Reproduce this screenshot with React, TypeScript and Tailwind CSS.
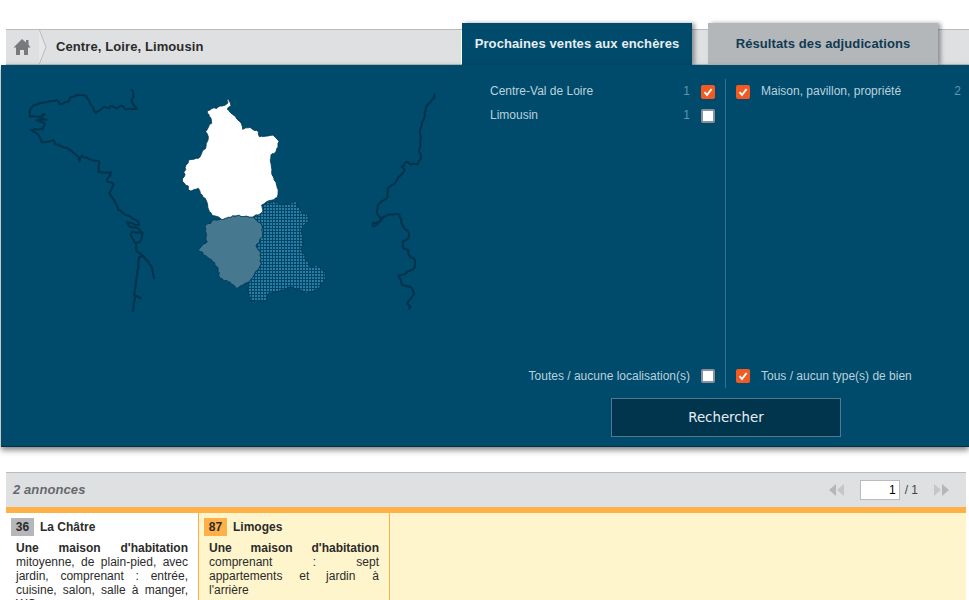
const CheckBox = ({ checked, top }: { checked: boolean; top?: boolean }) =>
  checked ? (
    <span className={`${top ? "mt-[3px]" : "mt-[2px]"} flex h-[14px] w-[14px] shrink-0 items-center justify-center rounded-[2px] bg-[#f15a22]`}>
      <svg width="10" height="10" viewBox="0 0 10 10" fill="none">
        <path d="M1.5 5.2 L4 8 L8.6 2" stroke="#fff" strokeWidth="2" />
      </svg>
    </span>
  ) : (
    <span className={`${top ? "mt-[3px]" : "mt-[2px]"} h-[14px] w-[14px] shrink-0 rounded-[2px] border-2 border-[#8a90a0] bg-white`} />
  );

const Row = ({ label, count, checked }: { label: string; count: string; checked: boolean }) => (
  <div className="flex h-[24px] items-start">
    <span className="flex-1 text-[#b9d2de]">{label}</span>
    <span className="mr-[11px] text-[#5f97ad]">{count}</span>
    <CheckBox checked={checked} top />
  </div>
);

// Roughens a traced outline: each vertex moves by an amount that depends only on its position,
// so a border shared by two regions stays shared.
const hash = (x: number, y: number) => {
  const s = Math.sin(Math.round(x) * 12.9898 + Math.round(y) * 78.233) * 43758.5453;
  return s - Math.floor(s);
};
const jag = (pts: number[][], step: number, amp: number, close: boolean) => {
  const out: string[] = [];
  const all = close ? [...pts, pts[0]] : pts;
  all.forEach((p, i) => {
    if (i === 0) {
      out.push(`M${p[0]} ${p[1]}`);
      return;
    }
    const q = all[i - 1];
    const n = Math.max(1, Math.round(Math.hypot(p[0] - q[0], p[1] - q[1]) / step));
    for (let k = 1; k <= n; k++) {
      const x = q[0] + ((p[0] - q[0]) * k) / n;
      const y = q[1] + ((p[1] - q[1]) * k) / n;
      const end = k === n;
      const dx = end ? 0 : (hash(x, y) - 0.5) * amp;
      const dy = end ? 0 : (hash(y + 7, x + 3) - 0.5) * amp;
      out.push(`L${(x + dx).toFixed(1)} ${(y + dy).toFixed(1)}`);
    }
  });
  return out.join(" ") + (close ? " Z" : "");
};

const coastA = [[365,12],[370,30],[365,50],[372,62],[381,72],[345,73],[335,62],[322,70],[300,64],[298,70],[285,65],[258,84],[245,62],[228,32],[205,30],[180,38],[175,50],[150,58],[140,45],[105,52],[70,62],[60,75],[60,95],[85,95],[105,88],[85,96],[110,104],[80,105],[105,115],[100,130],[62,134],[85,148],[95,172],[130,165],[135,178],[170,188],[205,215],[208,230],[215,212],[245,225],[268,230],[265,262],[303,262],[290,285],[310,298],[298,325],[315,350],[325,375],[385,410],[388,420],[350,412],[360,425],[385,430],[398,445],[390,470],[378,475],[362,450],[365,440],[395,445]];
const coastB = [[378,475],[378,495],[395,510],[425,545],[432,580],[425,545],[400,512],[388,515],[380,580],[372,630],[392,640],[375,630],[368,680]];
const east = [[284,25],[284,38],[262,60],[252,100],[240,135],[243,160],[237,200],[243,215],[232,238],[210,238],[200,230],[185,245],[195,255],[168,290],[143,312],[143,335],[113,360],[110,385],[122,398],[115,415],[98,425],[98,415],[120,410],[130,395],[150,388],[178,388],[188,420],[207,445],[205,460],[188,470],[190,490],[205,495],[207,510],[225,525],[222,550],[195,567],[175,572],[187,600],[212,605],[222,627],[202,655],[212,665],[205,672]];
const white = [[175,25],[178,35],[183,48],[175,52],[172,58],[190,75],[210,95],[218,118],[240,112],[265,125],[268,140],[310,135],[327,155],[318,185],[303,195],[305,245],[322,295],[322,323],[290,335],[275,345],[278,365],[250,380],[195,378],[160,388],[135,378],[118,365],[112,340],[85,295],[60,303],[55,288],[38,275],[48,225],[55,212],[85,205],[108,170],[115,140],[107,125],[125,100],[112,62],[150,48],[170,42]];
const west = [[250,380],[275,405],[278,440],[258,468],[272,490],[272,525],[240,572],[225,580],[200,595],[175,575],[150,565],[145,535],[125,510],[85,480],[112,455],[105,410],[130,390],[160,388],[195,378]];
const dotted = [[278,345],[310,335],[340,345],[378,335],[395,368],[415,380],[412,400],[395,415],[398,450],[395,480],[420,530],[440,525],[465,545],[467,565],[440,600],[410,610],[360,590],[340,600],[295,610],[290,632],[240,635],[232,600],[240,572],[272,525],[272,490],[258,468],[278,440],[275,405],[250,380],[278,365]];

const Card = ({ dept, city, badge, className, children }: any) => (
  <div className={`shrink-0 border-r border-[#ffb047] ${className}`}>
    <div className="mt-[5px] ml-[5px] flex items-center gap-[6px] font-bold">
      <span className={`flex h-[18px] w-[23px] items-center justify-center ${badge}`}>{dept}</span>
      <span>{city}</span>
    </div>
    <div className="mt-[5px] mx-[10px] text-justify leading-[14px]">{children}</div>
  </div>
);

const Arrows = ({ flip }: { flip?: boolean }) => (
  <svg width="16" height="12" viewBox="0 0 16 12" className={flip ? "rotate-180" : ""}>
    <path d="M7 0 V12 L0 6 Z" fill="#b4b6b9" />
    <path d="M15 0 V12 L8 6 Z" fill="#c4c6c8" />
  </svg>
);

export default function App() {
  return (
    <div className="h-[600px] w-[969px] overflow-hidden bg-white pt-[29px] text-[12px] text-[#2b2b2b] font-['Liberation_Sans',sans-serif]">
      <div className="ml-[6px] flex h-[36px] border-y border-[#b9bbbd] bg-[#dfe0e2]">
        <div className="flex w-[456px] items-center border-r border-white">
          <svg width="33" height="34" viewBox="0 0 33 34" className="shrink-0">
            <path d="M16 9 L20 12.5 V10 H22.5 V14.5 L24.5 17.5 H22 V25 H18 V20 H14 V25 H10 V17.5 H7.5 Z" fill="#77797c" />
          </svg>
          <svg width="12" height="34" viewBox="0 0 12 34" className="shrink-0">
            <path d="M0 -1 L7 17 L0 35" fill="#e6e7e9" stroke="#b9bbbd" />
          </svg>
          <span className="ml-[5px] text-[13px] font-bold tracking-[0.1px]">Centre, Loire, Limousin</span>
        </div>
        <div className="relative -mt-[7px] flex h-[42px] w-[230px] shrink-0 items-center justify-center bg-[#004a6b] pb-[1px] text-[13px] font-bold tracking-[0.1px] text-[#e6eef2] shadow-[3px_0_4px_rgba(0,0,0,0.35)]">
          Prochaines ventes aux enchères
        </div>
        <div className="relative ml-[16px] -mt-[7px] flex h-[42px] w-[230px] shrink-0 items-center justify-center bg-[#b4b7ba] pb-[1px] text-[13px] font-bold tracking-[0.1px] text-[#0f3a52] shadow-[3px_0_4px_rgba(0,0,0,0.35)]">
          Résultats des adjudications
        </div>
      </div>

      <div className="relative ml-[1px] flex h-[382px] border-b border-[#012f45] bg-[#004a6b] shadow-[0_3px_6px_rgba(0,0,0,0.5)]">
        <svg width="459" height="381" viewBox="1 65 459 381" className="shrink-0">
          <defs>
            <pattern id="d" width="9" height="9" patternUnits="userSpaceOnUse">
              <rect width="9" height="9" fill="#004668" />
              <rect x="3" y="3" width="6" height="6" fill="#2b7ea3" />
            </pattern>
          </defs>
          <g transform="translate(10 85) scale(0.33333)" fill="none" stroke="#01344c" strokeWidth="6" strokeLinejoin="round">
            <path d={jag(coastA, 8, 4, false)} />
            <path d={jag(coastB, 8, 3, false)} />
          </g>
          <g transform="translate(340 85) scale(0.33333)" fill="none" stroke="#01344c" strokeWidth="6" strokeLinejoin="round">
            <path d={jag(east, 8, 4, false)} />
          </g>
          <g transform="translate(170 90) scale(0.33333)" stroke="#013a55" strokeWidth="2.5">
            <path d={jag(dotted, 7, 6, true)} fill="url(#d)" />
            <path d={jag(west, 7, 6, true)} fill="#46788f" />
            <path d={jag(white, 7, 6, true)} fill="#fff" />
          </g>
        </svg>

        <div className="flex flex-1 flex-col">
          <div className="mt-[14px] flex h-[309px]">
            <div className="ml-[30px] flex w-[236px] flex-col border-r border-[#3d7088] pr-[10px] pt-[3px]">
              <Row label="Centre-Val de Loire" count="1" checked />
              <Row label="Limousin" count="1" checked={false} />
              <div className="mt-auto mb-[3px] flex items-start justify-end">
                <span className="mr-[11px] text-[#b9d2de]">Toutes / aucune localisation(s)</span>
                <CheckBox checked={false} />
              </div>
            </div>
            <div className="flex flex-1 flex-col pl-[10px] pr-[8px] pt-[3px]">
              <div className="flex items-start">
                <CheckBox checked top />
                <span className="ml-[11px] flex-1 text-[#b9d2de]">Maison, pavillon, propriété</span>
                <span className="text-[#5f97ad]">2</span>
              </div>
              <div className="mt-auto mb-[3px] flex items-start">
                <CheckBox checked />
                <span className="ml-[11px] text-[#b9d2de]">Tous / aucun type(s) de bien</span>
              </div>
            </div>
          </div>
          <button className="mt-[10px] ml-[151px] flex h-[39px] w-[230px] items-center justify-center border border-[#4d7a90] bg-[#01354d] text-[13.333px] text-[#e6eef2] font-['DejaVu_Sans',sans-serif]">
            Rechercher
          </button>
        </div>
      </div>

      <div className="ml-[6px] mt-[25px] flex h-[35px] w-[960px] items-center border-t border-[#b9bbbd] bg-[#dfe0e2] pl-[7px] pr-[17px]">
        <span className="flex-1 text-[13px] font-bold italic tracking-[0.1px] text-[#66696c]">2 annonces</span>
        <Arrows />
        <span className="ml-[15px] flex h-[20px] w-[40px] items-center justify-end border border-[#b9bbbd] bg-white pr-[3px] text-black">1</span>
        <span className="ml-[5px] text-[#444]">/ 1</span>
        <span className="ml-[15px]"><Arrows flip /></span>
      </div>
      <div className="ml-[6px] flex h-[94px] w-[960px] border-t-[6px] border-[#ffb047] bg-[#fff5cc]">
        <Card dept="36" city="La Châtre" badge="bg-[#b5b7ba]" className="w-[193px] bg-white">
          <b>Une maison d'habitation</b> mitoyenne, de plain-pied, avec jardin, comprenant : entrée, cuisine, salon, salle à manger, WC
        </Card>
        <Card dept="87" city="Limoges" badge="bg-[#ffb047]" className="w-[191px]">
          <b>Une maison d'habitation</b> comprenant : sept appartements et jardin à l'arrière
        </Card>
      </div>
    </div>
  );
}
